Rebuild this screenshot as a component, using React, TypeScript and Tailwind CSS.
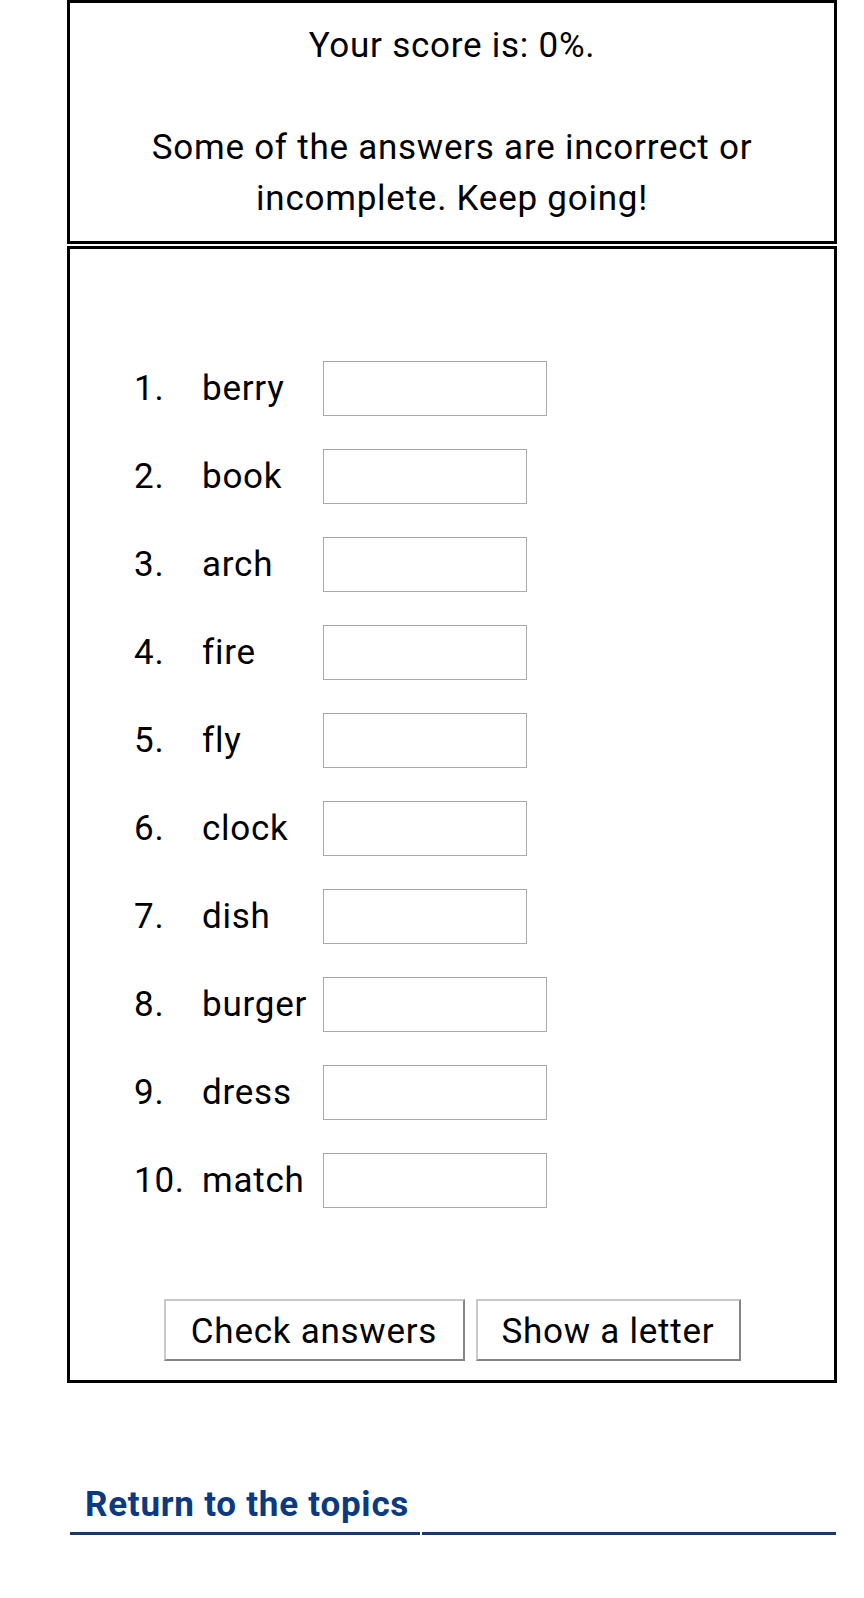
import React from "react";

const items: { n: string; w: string; wide: boolean }[] = [
  { n: "1.", w: "berry", wide: true },
  { n: "2.", w: "book", wide: false },
  { n: "3.", w: "arch", wide: false },
  { n: "4.", w: "fire", wide: false },
  { n: "5.", w: "fly", wide: false },
  { n: "6.", w: "clock", wide: false },
  { n: "7.", w: "dish", wide: false },
  { n: "8.", w: "burger", wide: true },
  { n: "9.", w: "dress", wide: true },
  { n: "10.", w: "match", wide: true },
];

export default function App() {
  return (
    <div className="w-[864px] min-h-[1598px] bg-white font-['Roboto',_'Liberation_Sans',_sans-serif] text-black tracking-[0.75px]">
      <div className="ml-[67px] w-[770px]">
        <div className="border-[3px] border-black pt-[17px] pb-[17px] text-center text-[35px] leading-[51px]">
          <p>Your score is: 0%.</p>
          <p className="mt-[51px]">
            Some of the answers are incorrect or
            <br />
            incomplete. Keep going!
          </p>
        </div>
        <div className="mt-[2px] border-[3px] border-black pt-[95px] pb-[19px]">
          <div className="flex flex-col">
            {items.map((it) => (
              <div key={it.n} className="flex h-[88px] items-center pl-[64px] text-[35px] leading-[40px]">
                <span className="w-[68px] shrink-0 pt-[2px]">{it.n}</span>
                <span className="w-[121px] shrink-0 pt-[2px]">{it.w}</span>
                <input
                  type="text"
                  className={
                    (it.wide ? "w-[224px]" : "w-[204px]") +
                    " h-[55px] border border-[#a9a9a9] bg-white outline-none"
                  }
                />
              </div>
            ))}
          </div>
          <div className="mt-[75px] flex justify-center gap-[11px]">
            <button className="h-[62px] w-[301px] border-2 border-t-[#c8c8c8] border-l-[#c8c8c8] border-b-[#858585] border-r-[#858585] bg-white pt-[3px] text-[35px] leading-[40px] tracking-[0.75px] text-black">
              Check answers
            </button>
            <button className="h-[62px] w-[265px] border-2 border-t-[#c8c8c8] border-l-[#c8c8c8] border-b-[#858585] border-r-[#858585] bg-white pt-[3px] text-[35px] leading-[40px] tracking-[0.75px] text-black">
              Show a letter
            </button>
          </div>
        </div>
      </div>
      <div className="ml-[70px] w-[766px] mt-[102px]">
        <a href="#" className="block pl-[15px] text-[35px] font-bold leading-[40px] text-[#0b3a80] no-underline">
          Return to the topics
        </a>
        <div className="mt-[7px] flex gap-[2px]">
          <div className="h-[3px] w-[350px] bg-[#173a66]" />
          <div className="h-[3px] flex-1 bg-[#173a66]" />
        </div>
      </div>
    </div>
  );
}
